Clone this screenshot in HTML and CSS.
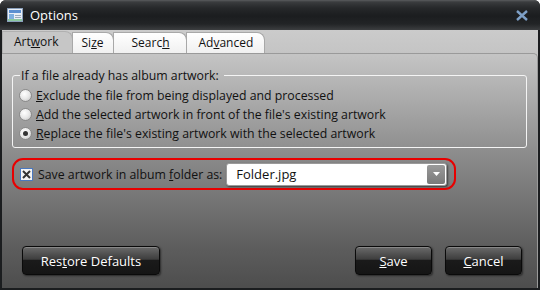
FILE: index.html
```html
<!DOCTYPE html>
<html lang="en">
<head>
  <meta charset="UTF-8">
  <title>Options</title>
  <link rel="stylesheet" href="styles.css">
</head>
<body>
  <div class="window">
    <!-- Title bar -->
    <div class="titlebar">
      <svg class="app-icon" width="16" height="14" viewBox="0 0 16 14">
        <rect x="0.5" y="0.5" width="15" height="13" fill="#e8eef6" stroke="#8aa0bc"/>
        <rect x="2" y="2" width="12" height="3" fill="#5b8fd0"/>
        <rect x="2" y="6" width="5" height="5" fill="#7fb0e0"/>
        <rect x="8" y="7" width="6" height="1" fill="#9ab"/>
        <rect x="8" y="9" width="6" height="1" fill="#9ab"/>
        <rect x="1" y="11" width="14" height="2" fill="#8cc8a0"/>
      </svg>
      <span class="title">Options</span>
      <svg class="close" width="12" height="11" viewBox="0 0 12 11">
        <path d="M1 1 L11 10 M11 1 L1 10" stroke="#7d9fc6" stroke-width="2.4"/>
      </svg>
    </div>

    <div class="client">
      <!-- Tabs -->
      <div class="tabs">
        <div class="tab active">Art<u>w</u>ork</div>
        <div class="tab">Si<u>z</u>e</div>
        <div class="tab">Searc<u>h</u></div>
        <div class="tab">Ad<u>v</u>anced</div>
      </div>

      <div class="panel">
        <fieldset class="group">
          <legend>If a file already has album artwork:</legend>
          <label class="radio-row"><span class="radio"></span><span><u>E</u>xclude the file from being displayed and processed</span></label>
          <label class="radio-row"><span class="radio"></span><span><u>A</u>dd the selected artwork in front of the file's existing artwork</span></label>
          <label class="radio-row"><span class="radio checked"></span><span><u>R</u>eplace the file's existing artwork with the selected artwork</span></label>
        </fieldset>

        <div class="save-row">
          <span class="checkbox">
            <svg width="9" height="9" viewBox="0 0 9 9"><path d="M1 1 L8 8 M8 1 L1 8" stroke="#333" stroke-width="2"/></svg>
          </span>
          <span class="save-label">Save artwork in album <u>f</u>older as:</span>
          <div class="combo">
            <span class="combo-text">Folder.jpg</span>
            <span class="combo-btn">
              <svg width="7" height="4" viewBox="0 0 7 4"><path d="M0 0 H7 L3.5 4 Z" fill="#fff"/></svg>
            </span>
          </div>
        </div>

        <div class="buttons">
          <button class="btn restore">Res<u>t</u>ore Defaults</button>
          <div class="spacer"></div>
          <button class="btn"><u>S</u>ave</button>
          <button class="btn"><u>C</u>ancel</button>
        </div>
      </div>
    </div>
  </div>
</body>
</html>
```

FILE: styles.css
```css
html, body {
  margin: 0;
  padding: 0;
  background: #fff;
}

.window {
  width: 540px;
  height: 290px;
  box-sizing: border-box;
  background: #1b1d1f;
  border-radius: 6px 6px 0 0;
  padding: 0 2px 2px 2px;
  display: flex;
  flex-direction: column;
  font-family: "Open Sans", "Noto Sans", sans-serif;
  font-size: 12px;
  color: #111;
}

.titlebar {
  height: 30px;
  flex: none;
  display: flex;
  align-items: center;
  padding: 0 8px 0 7px;
  background: linear-gradient(#5a5c5e 0, #3a3c3e 2px, #26282a 8px, #1b1d1f 16px, #222426 24px, #3c3e40 30px);
  border-radius: 6px 6px 0 0;
  margin: 0 -2px;
}

.app-icon {
  margin-right: 7px;
}

.title {
  color: #fff;
  font-size: 13px;
  flex: 1;
}

.close {
  margin-right: 4px;
}

.client {
  flex: 1;
  display: flex;
  flex-direction: column;
  background: linear-gradient(#cbcbcb 0, #c4c4c4 25px, #8e8e8e 120px, #5c5c5c 220px, #4e4e4e 256px);
}

.tabs {
  display: flex;
  height: 22px;
  padding-top: 1px;
  align-items: flex-end;
}

.tab {
  height: 20px;
  line-height: 19px;
  padding: 0 12px;
  background: linear-gradient(#ffffff, #f0f0f0);
  border: 1px solid #a8a8a8;
  border-bottom: none;
  border-radius: 0 8px 0 0;
  margin-right: -1px;
  color: #111;
}

.tab.active {
  background: #c6c6c6;
  height: 21px;
  padding: 0 13px 0 11px;
  border-color: #b0b0b0;
}

.tab:nth-child(2) { padding: 0 9px 0 9px; }
.tab:nth-child(3) { padding: 0 16px 0 18px; }
.tab:nth-child(4) { padding: 0 11px 0 12px; }

.panel {
  flex: 1;
  display: flex;
  flex-direction: column;
  border-top: 1px solid #9a9a9a;
  border-right: 1px solid #9a9a9a;
  border-radius: 0 5px 0 0;
  padding: 13px 10px 13px 10px;
}

.group {
  margin: 0;
  border: 1px solid #f4f4f4;
  border-radius: 3px;
  padding: 2px 0 4px 6px;
  font-size: 12.3px;
}

.group legend {
  padding: 0 5px 0 1px;
  margin-left: 1px;
}

.radio-row {
  display: flex;
  align-items: center;
  height: 19px;
}

.radio {
  width: 11px;
  height: 11px;
  border-radius: 50%;
  border: 1px solid #8a8a8a;
  background: radial-gradient(circle at 40% 35%, #ffffff 0, #e8e8e8 50%, #bdbdbd 100%);
  margin-right: 4px;
  position: relative;
}

.radio.checked::after {
  content: "";
  position: absolute;
  left: 3px;
  top: 3px;
  width: 5px;
  height: 5px;
  border-radius: 50%;
  background: #333;
}

.save-row {
  display: flex;
  align-items: center;
  margin-top: 10px;
  width: 444px;
  height: 32px;
  box-sizing: border-box;
  border: 2px solid #e80000;
  border-radius: 11px;
  padding: 0 7px 0 6px;
  font-size: 12.3px;
}

.checkbox {
  width: 11px;
  height: 11px;
  border: 1px solid #4a78c0;
  background: #f4f4f4;
  display: flex;
  align-items: center;
  justify-content: center;
  margin-right: 5px;
}

.save-label {
  margin-right: 4px;
}

.combo {
  flex: 1;
  height: 21px;
  display: flex;
  align-items: center;
  background: #fff;
  border-radius: 3px;
  box-shadow: 1px 1px 2px rgba(0, 0, 0, 0.5);
  border: 1px solid #9a9a9a;
}

.combo-text {
  flex: 1;
  padding-left: 9px;
  font-size: 13px;
}

.combo-btn {
  width: 18px;
  height: 19px;
  margin-right: 1px;
  background: linear-gradient(#9a9a9a, #7a7a7a);
  border-radius: 2px;
  display: flex;
  align-items: center;
  justify-content: center;
}

.buttons {
  margin-top: auto;
  display: flex;
  align-items: center;
  padding: 0 5px 0 10px;
}

.spacer {
  flex: 1;
}

.btn {
  font-family: "Open Sans", "Noto Sans", sans-serif;
  font-size: 13px;
  color: #fff;
  height: 29px;
  width: 77px;
  padding: 0;
  border: 1px solid #0a0a0a;
  border-radius: 4px;
  background: linear-gradient(#6a6a6a 0, #3e3e3e 45%, #1a1a1a 50%, #151515 100%);
  box-shadow: 1px 1px 2px rgba(0, 0, 0, 0.5), inset 0 1px 0 #888;
  margin-left: 13px;
}

.btn.restore {
  width: 138px;
  margin-left: 0;
}
```
